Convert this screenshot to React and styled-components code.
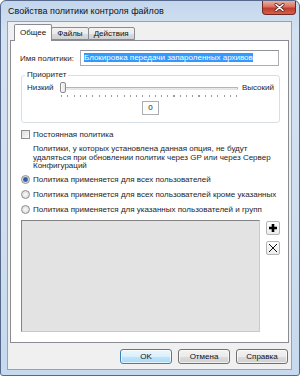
import React from "react";
import styled, { createGlobalStyle } from "styled-components";

const Global = createGlobalStyle`
  html, body {
    margin: 0;
    padding: 0;
    width: 300px;
    height: 376px;
    overflow: hidden;
    background: #fff;
  }
  * { box-sizing: border-box; }
`;

const Window = styled.div`
  width: 300px;
  height: 376px;
  display: flex;
  flex-direction: column;
  padding: 0 7px 5px 6px;
  border: 1px solid #56698a;
  border-radius: 6px 6px 3px 3px;
  background: linear-gradient(180deg, #c3d6ec 0%, #d3e2f2 8%, #cfdff0 60%, #c7d9ee 100%);
  font-family: "Liberation Sans", Arial, sans-serif;
  font-size: 8px;
  color: #1e1e1e;
`;

const TitleBar = styled.div`
  height: 20px;
  display: flex;
  align-items: flex-start;
`;

const Title = styled.div`
  flex: 1;
  padding: 5px 0 0 1px;
  font-size: 9px;
  color: #111;
`;

const CloseButton = styled.div`
  width: 34px;
  height: 14px;
  margin-right: -4px;
  display: flex;
  align-items: center;
  justify-content: center;
  border: 1px solid #6e2b25;
  border-top: none;
  border-radius: 0 0 4px 4px;
  background: linear-gradient(180deg, #eab0a0 0%, #d9705f 45%, #c23a2a 55%, #d5604b 100%);
`;

const Client = styled.div`
  flex: 1;
  display: flex;
  flex-direction: column;
  border: 1px solid #8fa4bf;
  background: #f0f0f0;
  padding: 2px 2px 0 2px;
`;

const TabRow = styled.div`
  height: 17px;
  display: flex;
  align-items: flex-end;
  margin: 0 0 -1px 4px;
  position: relative;
  z-index: 1;
`;

const Tab = styled.div`
  height: ${(p) => (p.$active ? "17px" : "13px")};
  margin-bottom: ${(p) => (p.$active ? "0" : "1px")};
  margin-left: ${(p) => (p.$first ? "0" : "-1px")};
  padding: ${(p) => (p.$active ? "3px 5px 0" : "1px 5px 0")};
  border: 1px solid #898c95;
  border-bottom: ${(p) => (p.$active ? "none" : "1px solid #898c95")};
  border-radius: 2px 2px 0 0;
  background: ${(p) =>
    p.$active ? "#fff" : "linear-gradient(180deg, #f2f2f2 0%, #ebebeb 50%, #dddddd 51%, #cfcfcf 100%)"};
  line-height: 10px;
  color: #111;
`;

const Panel = styled.div`
  flex: 1;
  display: flex;
  flex-direction: column;
  background: #fff;
  border: 1px solid #898c95;
  padding: 9px 8px 10px 9px;
`;

const NameRow = styled.div`
  height: 16px;
  display: flex;
  align-items: center;
`;

const NameLabel = styled.div`
  width: 60px;
`;

const TextInput = styled.div`
  flex: 1;
  height: 16px;
  margin-right: 1px;
  padding: 2px 3px;
  border: 1px solid #abadb3;
  border-top-color: #8e939d;
  line-height: 10px;
`;

const Selected = styled.span`
  background: #3399ff;
  color: #fff;
`;

const Group = styled.fieldset`
  margin: 4px 0 0 1px;
  padding: 0 5px 7px 5px;
  border: 1px solid #d5dfe5;
  border-radius: 3px;
`;

const Legend = styled.legend`
  margin-left: -2px;
  padding: 0 2px;
  line-height: 10px;
`;

const SliderGrid = styled.div`
  margin-top: 2px;
  display: grid;
  grid-template-columns: auto 1fr auto;
  align-items: start;
`;

const SliderLabel = styled.div`
  line-height: 12px;
  margin: ${(p) => (p.$end ? "0 0 0 4px" : "0 8px 0 0")};
`;

const SliderColumn = styled.div`
  display: flex;
  flex-direction: column;
`;

const Track = styled.div`
  position: relative;
  height: 12px;
  display: flex;
  align-items: center;
`;

const TrackLine = styled.div`
  flex: 1;
  height: 3px;
  border: 1px solid #b3b6b9;
  border-bottom-color: #e3e6e8;
  background: #e7eaea;
  border-radius: 1px;
`;

const Thumb = styled.div`
  position: absolute;
  left: -1px;
  top: 0;
  width: 6px;
  height: 11px;
  border: 1px solid #8d8d8d;
  border-radius: 2px;
  background: linear-gradient(90deg, #fbfbfb, #e4e4e4);
`;

const Ticks = styled.div`
  margin-top: 1px;
  height: 2px;
  background: repeating-linear-gradient(90deg, #9a9a9a 0 1px, transparent 1px 6.25px);
`;

const NumberBox = styled.div`
  width: 17px;
  height: 14px;
  margin: 4px auto 0;
  border: 1px solid #abadb3;
  text-align: center;
  line-height: 12px;
`;

const CheckRow = styled.div`
  margin: 6px 0 0 1px;
  height: 11px;
  display: flex;
  align-items: center;
`;

const CheckBox = styled.div`
  width: 9px;
  height: 9px;
  border: 1px solid #8f8f8f;
  background: linear-gradient(135deg, #dcdcdc, #fbfbfb);
`;

const Caption = styled.div`
  margin-left: 3px;
  line-height: 10px;
`;

const Description = styled.div`
  margin: 5px 0 0 13px;
  line-height: 8.7px;
`;

const RadioList = styled.div`
  margin-top: 1px;
  display: flex;
  flex-direction: column;
`;

const RadioRow = styled.div`
  height: 15px;
  display: flex;
  align-items: center;
  margin-left: 1px;
`;

const Radio = styled.div`
  width: 9px;
  height: 9px;
  border-radius: 50%;
  border: 1px solid #8e8f8f;
  background: ${(p) =>
    p.$checked
      ? "radial-gradient(circle, #2b5fa8 0 1.5px, #6d9bd6 2.5px, #eaeaea 3.2px)"
      : "radial-gradient(circle, #f4f4f4 0 1px, #d8d8d8 4px)"};
`;

const ListArea = styled.div`
  flex: 1;
  margin: 3px 0 0 1px;
  display: flex;
  gap: 6px;
`;

const UserList = styled.div`
  flex: 1;
  background: #e3e3e3;
  border: 1px solid #c9c9c9;
  border-top-color: #838383;
  border-left-color: #838383;
`;

const SideButtons = styled.div`
  width: 14px;
  margin-top: 1px;
  display: flex;
  flex-direction: column;
  gap: 6px;
`;

const IconButton = styled.div`
  width: 14px;
  height: 14px;
  display: flex;
  align-items: center;
  justify-content: center;
  border: 1px solid #b5b5b5;
  border-radius: 2px;
  background: linear-gradient(180deg, #fdfdfd, #ececec);
`;

const ButtonRow = styled.div`
  height: 15px;
  margin: 6px 0 5px;
  padding-right: 1px;
  display: flex;
  justify-content: flex-end;
  gap: 6px;
`;

const Button = styled.div`
  width: 52px;
  height: 15px;
  display: flex;
  align-items: center;
  justify-content: center;
  border: 1px solid ${(p) => (p.$default ? "#3c7fb1" : "#707070")};
  border-radius: 3px;
  background: ${(p) =>
    p.$default
      ? "linear-gradient(180deg, #eaf6fd 0%, #d9f0fc 50%, #bee6fd 51%, #a7d9f5 100%)"
      : "linear-gradient(180deg, #f2f2f2 0%, #ebebeb 50%, #dddddd 51%, #cfcfcf 100%)"};
  box-shadow: inset 0 0 0 1px rgba(255, 255, 255, 0.7);
  color: #111;
`;

const radios = [
  { text: "Политика применяется для всех пользователей", checked: true },
  { text: "Политика применяется для всех пользователей кроме указанных" },
  { text: "Политика применяется для указанных пользователей и групп" },
];

export default function App() {
  return (
    <>
      <Global />
      <Window>
        <TitleBar>
          <Title>Свойства политики контроля файлов</Title>
          <CloseButton>
            <svg width="11" height="9" viewBox="0 0 11 9">
              <path d="M2 1.5 L9 7.5 M9 1.5 L2 7.5" stroke="#5a2a26" strokeWidth="3" strokeLinecap="round" />
              <path d="M2 1.5 L9 7.5 M9 1.5 L2 7.5" stroke="#fff" strokeWidth="1.6" strokeLinecap="round" />
            </svg>
          </CloseButton>
        </TitleBar>
        <Client>
          <TabRow>
            <Tab $active $first>Общее</Tab>
            <Tab>Файлы</Tab>
            <Tab>Действия</Tab>
          </TabRow>
          <Panel>
            <NameRow>
              <NameLabel>Имя политики:</NameLabel>
              <TextInput>
                <Selected>Блокировка передачи запароленных архивов</Selected>
              </TextInput>
            </NameRow>
            <Group>
              <Legend>Приоритет</Legend>
              <SliderGrid>
                <SliderLabel>Низкий</SliderLabel>
                <SliderColumn>
                  <Track>
                    <TrackLine />
                    <Thumb />
                  </Track>
                  <Ticks />
                </SliderColumn>
                <SliderLabel $end>Высокий</SliderLabel>
              </SliderGrid>
              <NumberBox>0</NumberBox>
            </Group>
            <CheckRow>
              <CheckBox />
              <Caption>Постоянная политика</Caption>
            </CheckRow>
            <Description>
              Политики, у которых установлена данная опция, не будут
              <br />
              удаляться при обновлении политик через GP или через Сервер
              <br />
              Конфигураций
            </Description>
            <RadioList>
              {radios.map((r) => (
                <RadioRow key={r.text}>
                  <Radio $checked={r.checked} />
                  <Caption>{r.text}</Caption>
                </RadioRow>
              ))}
            </RadioList>
            <ListArea>
              <UserList />
              <SideButtons>
                <IconButton>
                  <svg width="10" height="10" viewBox="0 0 10 10">
                    <path d="M5 1 V9 M1 5 H9" stroke="#000" strokeWidth="2.6" />
                  </svg>
                </IconButton>
                <IconButton>
                  <svg width="10" height="10" viewBox="0 0 10 10">
                    <path d="M1 1 L9 9 M9 1 L1 9" stroke="#111" strokeWidth="1" />
                  </svg>
                </IconButton>
              </SideButtons>
            </ListArea>
          </Panel>
          <ButtonRow>
            <Button $default>OK</Button>
            <Button>Отмена</Button>
            <Button>Справка</Button>
          </ButtonRow>
        </Client>
      </Window>
    </>
  );
}
